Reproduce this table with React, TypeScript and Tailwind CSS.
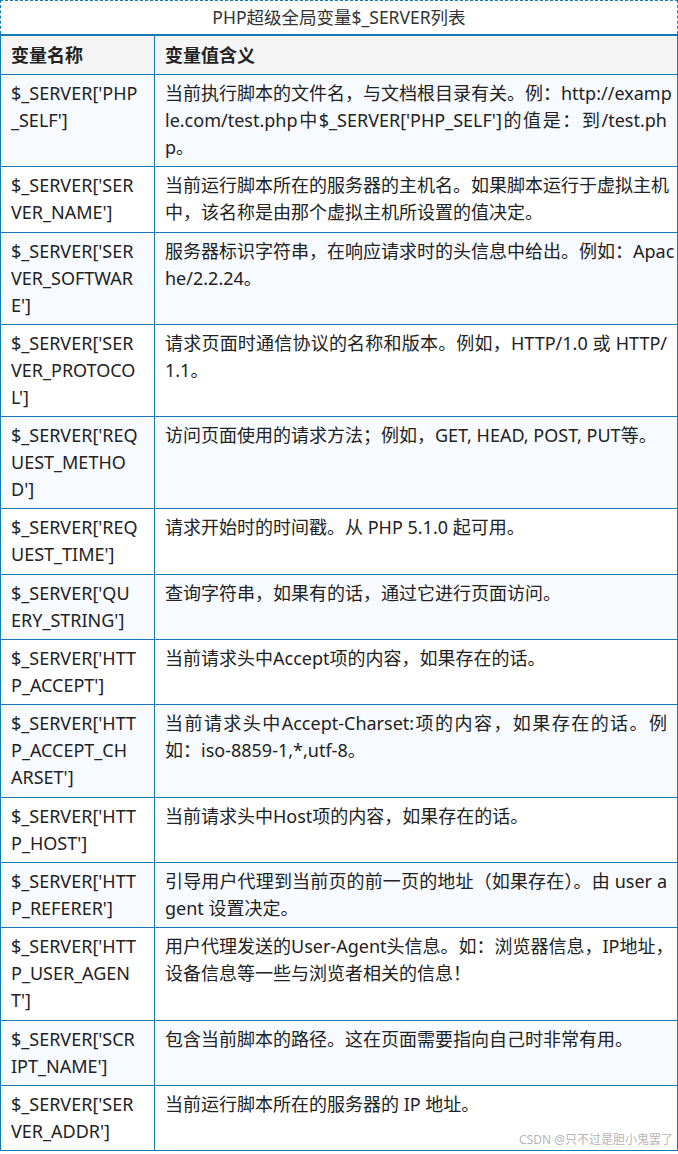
import React from 'react';

type Row = { name: string[]; desc: string[] };

const rows: Row[] = [
  {
    name: ["$_SERVER['PHP", "_SELF']"],
    desc: [
      '当前执行脚本的文件名，与文档根目录有关。例：http://examp',
      "le.com/test.php中$_SERVER['PHP_SELF']的值是：到/test.ph",
      'p。',
    ],
  },
  {
    name: ["$_SERVER['SER", "VER_NAME']"],
    desc: ['当前运行脚本所在的服务器的主机名。如果脚本运行于虚拟主机', '中，该名称是由那个虚拟主机所设置的值决定。'],
  },
  {
    name: ["$_SERVER['SER", 'VER_SOFTWAR', "E']"],
    desc: ['服务器标识字符串，在响应请求时的头信息中给出。例如：Apac', 'he/2.2.24。'],
  },
  {
    name: ["$_SERVER['SER", 'VER_PROTOCO', "L']"],
    desc: ['请求页面时通信协议的名称和版本。例如，HTTP/1.0 或 HTTP/', '1.1。'],
  },
  {
    name: ["$_SERVER['REQ", 'UEST_METHO', "D']"],
    desc: ['访问页面使用的请求方法；例如，GET, HEAD, POST, PUT等。'],
  },
  {
    name: ["$_SERVER['REQ", "UEST_TIME']"],
    desc: ['请求开始时的时间戳。从 PHP 5.1.0 起可用。'],
  },
  {
    name: ["$_SERVER['QU", "ERY_STRING']"],
    desc: ['查询字符串，如果有的话，通过它进行页面访问。'],
  },
  {
    name: ["$_SERVER['HTT", "P_ACCEPT']"],
    desc: ['当前请求头中Accept项的内容，如果存在的话。'],
  },
  {
    name: ["$_SERVER['HTT", 'P_ACCEPT_CH', "ARSET']"],
    desc: ['当前请求头中Accept-Charset:项的内容，如果存在的话。例', '如：iso-8859-1,*,utf-8。'],
  },
  {
    name: ["$_SERVER['HTT", "P_HOST']"],
    desc: ['当前请求头中Host项的内容，如果存在的话。'],
  },
  {
    name: ["$_SERVER['HTT", "P_REFERER']"],
    desc: ['引导用户代理到当前页的前一页的地址（如果存在）。由 user a', 'gent 设置决定。'],
  },
  {
    name: ["$_SERVER['HTT", 'P_USER_AGEN', "T']"],
    desc: ['用户代理发送的User-Agent头信息。如：浏览器信息，IP地址，', '设备信息等一些与浏览者相关的信息！'],
  },
  {
    name: ["$_SERVER['SCR", "IPT_NAME']"],
    desc: ['包含当前脚本的路径。这在页面需要指向自己时非常有用。'],
  },
  {
    name: ["$_SERVER['SER", "VER_ADDR']"],
    desc: ['当前运行脚本所在的服务器的 IP 地址。'],
  },
];

// each wrapped line is justified to the cell width, the last one is left aligned
const Lines = ({ lines }: { lines: string[] }) => (
  <>
    {lines.map((l, i) => (
      <div
        key={i}
        className={
          i < lines.length - 1
            ? 'whitespace-nowrap text-justify [text-align-last:justify]'
            : 'whitespace-nowrap'
        }
      >
        {l}
      </div>
    ))}
  </>
);

export default function App() {
  return (
    <div
      className="w-[678px] bg-white text-[#222]"
      style={{ fontFamily: '"Noto Sans", "Noto Sans CJK SC", sans-serif' }}
    >
      {/* Caption */}
      <div className="h-[34px] flex items-center justify-center border border-b-0 border-dashed border-[#127bb3] text-[17.5px] text-[#333]">
        PHP超级全局变量$_SERVER列表
      </div>

      {/* Table */}
      <table className="w-full border-collapse table-fixed text-[18px] leading-[27px] border-t-2 border-[#127bb3]">
        <colgroup>
          <col className="w-[154px]" />
          <col />
        </colgroup>
        <thead>
          <tr className="bg-[#f5f5f5]">
            <th className="border border-[#127bb3] px-[10px] pt-[6px] pb-[5px] text-left font-bold">变量名称</th>
            <th className="border border-[#127bb3] px-[10px] pt-[6px] pb-[5px] text-left font-bold">变量值含义</th>
          </tr>
        </thead>
        <tbody>
          {rows.map((r, i) => (
            <tr key={i} className={i % 2 === 0 ? 'bg-[#f7fbff]' : 'bg-white'}>
              <td className="border border-[#127bb3] px-[10px] pt-[5px] pb-[5.3px] align-top">
                <Lines lines={r.name} />
              </td>
              <td className="border border-[#127bb3] px-[10px] pt-[5px] pb-[5.3px] align-top relative">
                <Lines lines={r.desc} />
                {i === rows.length - 1 && (
                  <span className="absolute right-[4px] bottom-[2px] text-[12px] leading-[16px] text-[#b5b5b5]">
                    CSDN @只不过是胆小鬼罢了
                  </span>
                )}
              </td>
            </tr>
          ))}
        </tbody>
      </table>
    </div>
  );
}
